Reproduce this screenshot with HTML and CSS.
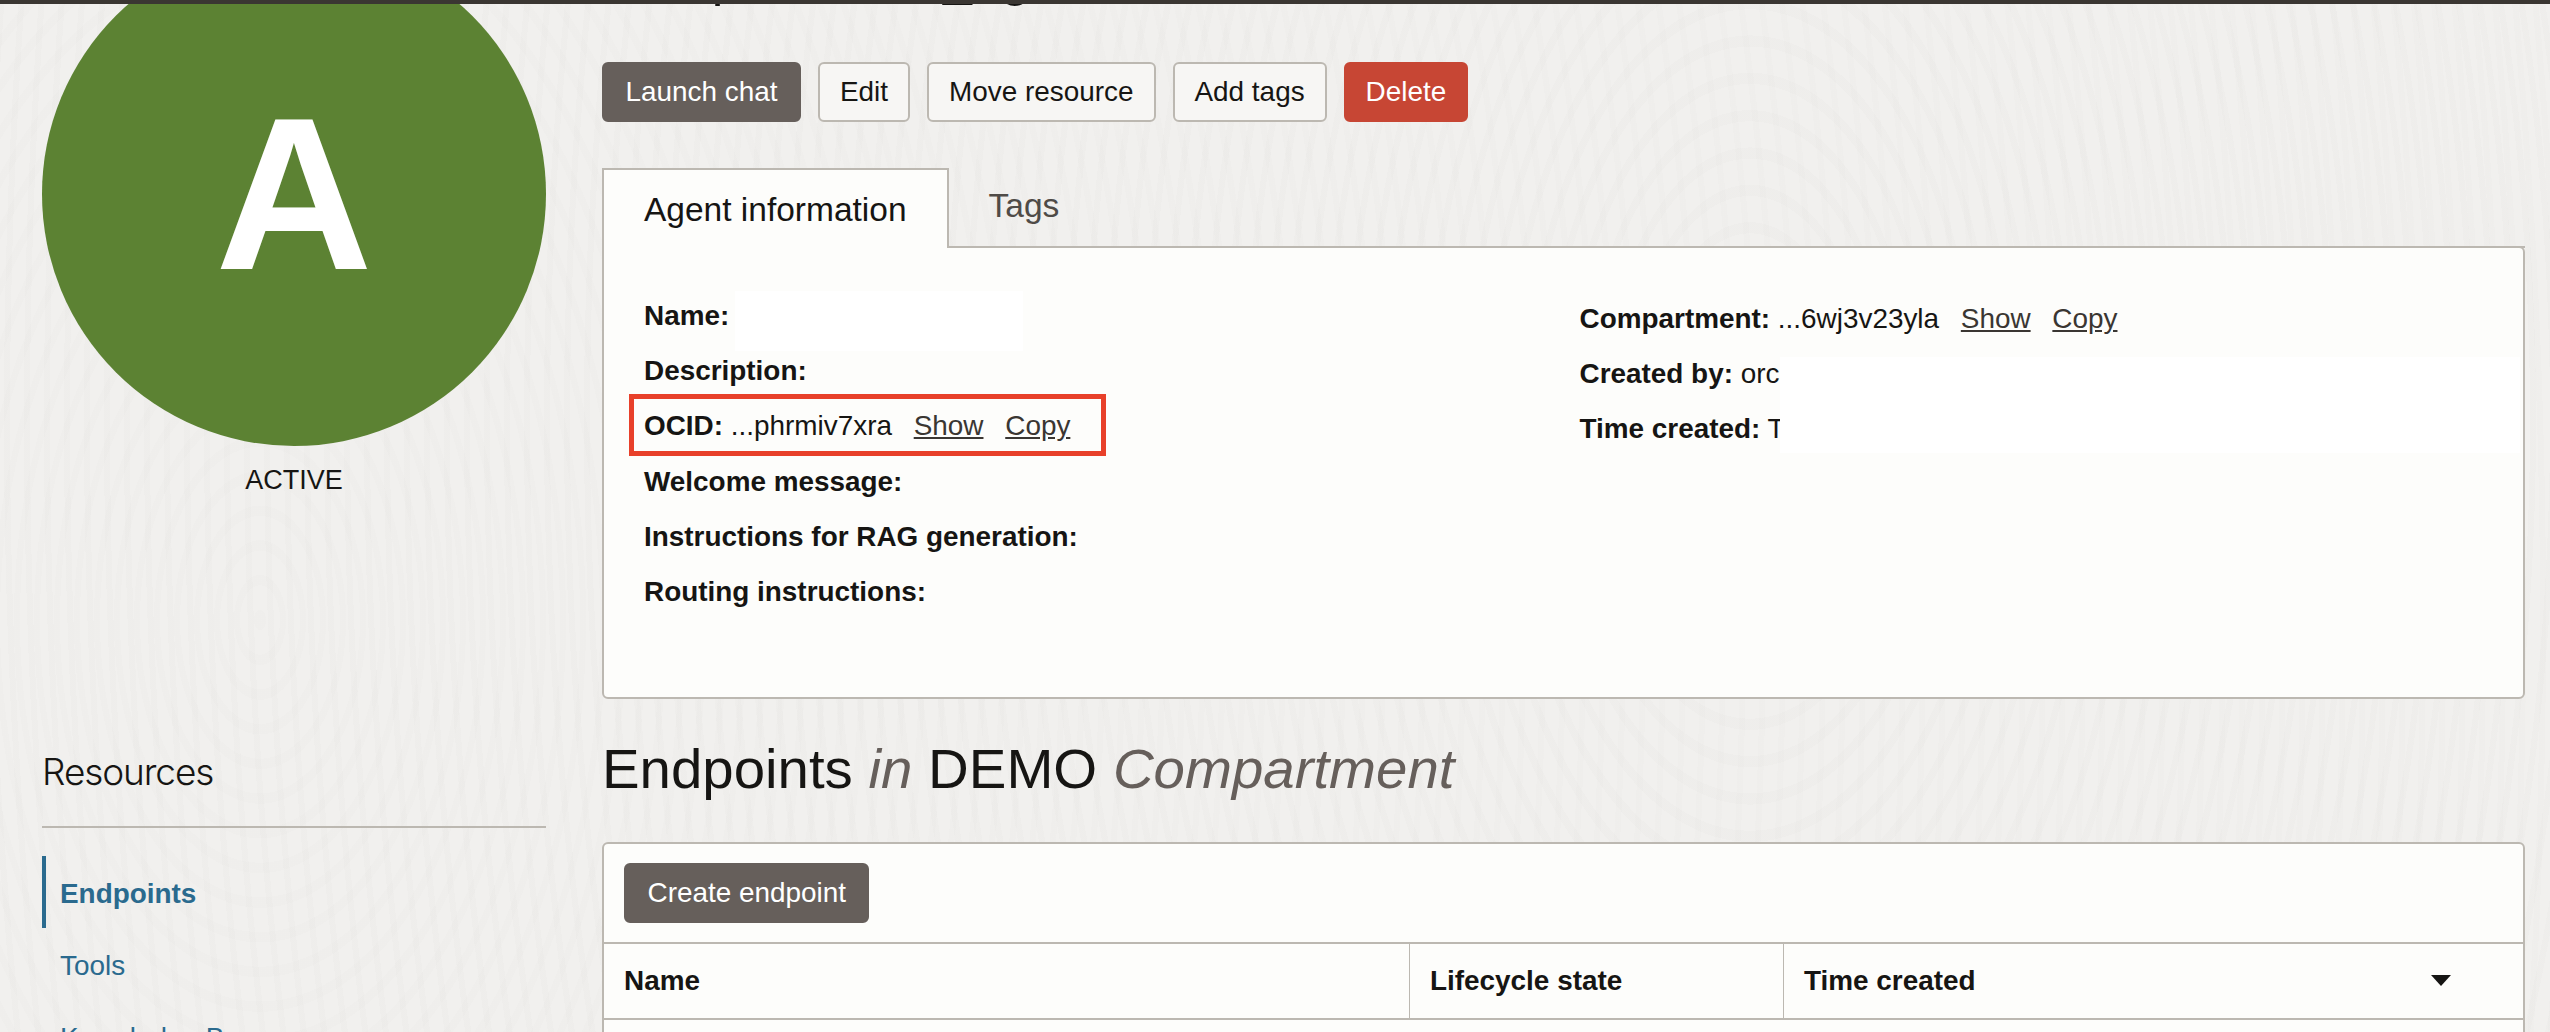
FILE: index.html
```html
<!DOCTYPE html>
<html lang="en">
<head>
    <meta charset="UTF-8">
    <title>Agent details</title>
    <link rel="stylesheet" href="styles.css">
</head>
<body>
    <div class="topbar"></div>
    <div class="page">
        <aside class="side">
            <div class="avatar">A</div>
            <div class="status">ACTIVE</div>
            <h3 class="res-title">Resources</h3>
            <ul class="res-list">
                <li class="active">Endpoints</li>
                <li>Tools</li>
                <li>Knowledge Bases</li>
            </ul>
        </aside>
        <main class="content">
            <h1 class="agent-name">Compartments_agent</h1>
            <div class="actions">
                <button class="btn btn-dark">Launch chat</button>
                <button class="btn">Edit</button>
                <button class="btn">Move resource</button>
                <button class="btn">Add tags</button>
                <button class="btn btn-red">Delete</button>
            </div>
            <div class="tabs">
                <div class="tab selected">Agent information</div>
                <div class="tab">Tags</div>
            </div>
            <section class="info">
                <div class="info-col">
                    <div class="row"><b>Name:</b></div>
                    <div class="row"><b>Description:</b></div>
                    <div class="row"><b>OCID:</b> ...phrmiv7xra <a>Show</a> <a>Copy</a></div>
                    <div class="row"><b>Welcome message:</b></div>
                    <div class="row"><b>Instructions for RAG generation:</b></div>
                    <div class="row"><b>Routing instructions:</b></div>
                </div>
                <div class="info-col right">
                    <div class="row"><b>Compartment:</b> ...6wj3v23yla <a>Show</a> <a>Copy</a></div>
                    <div class="row"><b>Created by:</b> orc</div>
                    <div class="row"><b>Time created:</b> T</div>
                </div>
                <div class="patch patch-name"></div>
                <div class="patch patch-right"></div>
                <div class="callout"></div>
            </section>
            <h2 class="list-title">Endpoints <em>in</em> DEMO <em>Compartment</em></h2>
            <section class="table-card">
                <div class="toolbar">
                    <button class="btn btn-dark">Create endpoint</button>
                </div>
                <div class="thead">
                    <div class="th th-name">Name</div>
                    <div class="th th-state">Lifecycle state</div>
                    <div class="th th-time">Time created <span class="caret"></span></div>
                </div>
            </section>
        </main>
    </div>
</body>
</html>
```

FILE: styles.css
```css
* {
    box-sizing: border-box;
}
html, body {
    margin: 0;
    height: 1032px;
    overflow: hidden;
}
body {
    font-family: "Liberation Sans", Arial, sans-serif;
    font-size: 27.9px;
    color: #161513;
    background-color: #f1f0ee;
    background-image:
        repeating-radial-gradient(ellipse 300px 560px at 1750px 420px, rgba(90, 85, 75, 0.014) 0 6px, transparent 6px 20px),
        repeating-radial-gradient(ellipse 300px 520px at 260px 620px, rgba(90, 85, 75, 0.012) 0 6px, transparent 6px 20px);
}
.topbar {
    position: relative;
    z-index: 2;
    height: 4px;
    background-color: #3a3632;
}
.page {
    display: flex;
    margin-top: -62px;
    padding-left: 42px;
}
.side {
    width: 504px;
    flex-shrink: 0;
}
.avatar {
    width: 504px;
    height: 504px;
    border-radius: 50%;
    background-color: #5c8233;
    color: #fff;
    font-size: 218px;
    font-weight: bold;
    line-height: 504px;
    text-align: center;
}
.status {
    margin-top: 19px;
    text-align: center;
    font-size: 27px;
    line-height: 30px;
}
.res-title {
    margin: 255px 0 0;
    padding-bottom: 32px;
    border-bottom: 2px solid #bcb8b1;
    font-family: "Inter", sans-serif;
    font-size: 37px;
    font-weight: 300;
    line-height: 44px;
    letter-spacing: -1.1px;
}
.res-list {
    list-style: none;
    margin: 28px 0 0;
    padding: 0;
    color: #2a6a8e;
}
.res-list li {
    height: 72px;
    line-height: 75px;
    padding-left: 18px;
}
.res-list .active {
    border-left: 4px solid #2a6a8e;
    padding-left: 14px;
    font-weight: bold;
}
.content {
    width: 1923px;
    margin-left: 56px;
}
.agent-name {
    margin: 0;
    height: 62px;
    font-size: 52px;
    font-weight: normal;
    line-height: 62px;
    position: relative;
    top: 4px;
}
.actions {
    display: flex;
    gap: 17px;
    margin-top: 58px;
}
.btn {
    height: 60px;
    padding: 0 20px;
    border: 2px solid #bcb8b1;
    border-radius: 6px;
    background-color: #f7f6f4;
    color: #161513;
    font-family: inherit;
    font-size: 27.9px;
}
.btn-dark {
    padding: 0 21.5px;
    border-color: #665f5b;
    background-color: #665f5b;
    color: #fff;
}
.btn-red {
    border-color: #c74634;
    background-color: #c74634;
    color: #fff;
}
.tabs {
    display: flex;
    margin-top: 46px;
    height: 80px;
}
.tab {
    padding: 0 40px;
    font-size: 33.5px;
    line-height: 76px;
    color: #4f4b47;
    border-bottom: 2px solid #bcb8b1;
}
.tab:last-child {
    flex: 1;
}
.tab.selected {
    position: relative;
    z-index: 1;
    height: 80px;
    line-height: 80px;
    color: #161513;
    background-color: #fdfdfb;
    border: 2px solid #bcb8b1;
    border-bottom: 0;
}
.info {
    position: relative;
    display: flex;
    height: 453px;
    padding: 40px 40px 0;
    margin-top: -2px;
    background-color: #fdfdfb;
    border: 2px solid #bcb8b1;
    border-top-width: 2px;
    border-radius: 0 6px 6px 6px;
}
.info-col {
    width: 936px;
    padding-top: 1px;
}
.info-col.right {
    margin-left: 32px;
    padding-top: 4px;
}
.row {
    height: 55.2px;
    line-height: 54px;
    white-space: pre-wrap;
}
.row a {
    color: #3a3632;
    text-decoration: underline;
    margin-left: 14px;
    margin-right: 0;
}
.patch {
    position: absolute;
    background-color: #fff;
}
.patch-name {
    left: 131px;
    top: 43px;
    width: 288px;
    height: 60px;
}
.patch-right {
    left: 1176px;
    top: 109px;
    width: 740px;
    height: 96px;
}
.callout {
    position: absolute;
    left: 25px;
    top: 146px;
    width: 477px;
    height: 62px;
    border: 5px solid #e8402a;
}
.list-title {
    margin: 35px 0 0;
    font-size: 56.4px;
    font-weight: normal;
    line-height: 70px;
}
.list-title em {
    color: #665f5b;
}
.table-card {
    margin-top: 38px;
    background-color: #fdfdfb;
    border: 2px solid #bcb8b1;
    border-radius: 6px 6px 0 0;
    height: 300px;
}
.toolbar {
    height: 100px;
    padding: 19px 20px;
    border-bottom: 2px solid #bcb8b1;
}
.thead {
    display: flex;
    height: 76px;
    border-bottom: 2px solid #bcb8b1;
    font-weight: bold;
}
.th {
    padding-left: 20px;
    line-height: 74px;
}
.th-name {
    width: 805px;
}
.th-state {
    width: 374px;
    border-left: 1px solid #bcb8b1;
}
.th-time {
    flex: 1;
    position: relative;
    border-left: 1px solid #bcb8b1;
}
.caret {
    position: absolute;
    right: 72px;
    top: 31px;
    border-left: 10px solid transparent;
    border-right: 10px solid transparent;
    border-top: 11px solid #161513;
}
```
